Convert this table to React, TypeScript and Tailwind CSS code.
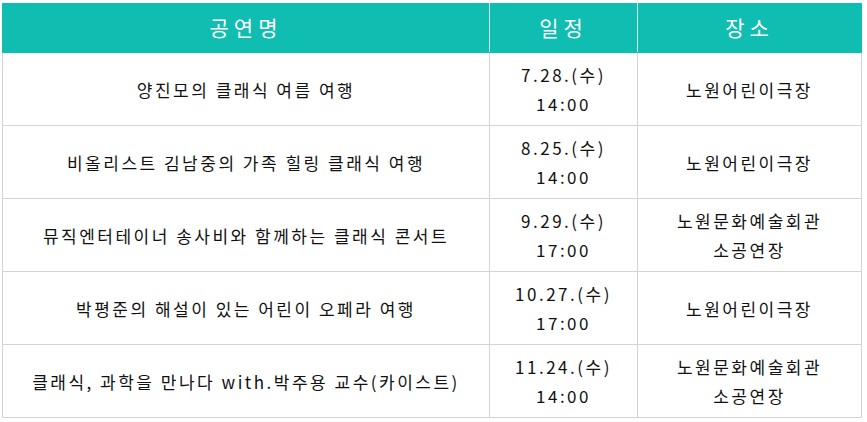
const ROWS = [
  { title: "양진모의 클래식 여름 여행", date: "7.28.(수)", time: "14:00", place: ["노원어린이극장"] },
  { title: "비올리스트 김남중의 가족 힐링 클래식 여행", date: "8.25.(수)", time: "14:00", place: ["노원어린이극장"] },
  { title: "뮤직엔터테이너 송사비와 함께하는 클래식 콘서트", date: "9.29.(수)", time: "17:00", place: ["노원문화예술회관", "소공연장"] },
  { title: "박평준의 해설이 있는 어린이 오페라 여행", date: "10.27.(수)", time: "17:00", place: ["노원어린이극장"] },
  { title: "클래식, 과학을 만나다 with.박주용 교수(카이스트)", date: "11.24.(수)", time: "14:00", place: ["노원문화예술회관", "소공연장"] },
];

export default function App() {
  return (
    <div className="min-h-screen bg-white pl-[2px] pt-[3px] text-[#111] [font-family:'Noto_Sans_CJK_KR',sans-serif]">
      <table className="w-[859px] table-fixed border-collapse text-[17px] tracking-[2.5px]">
        <colgroup>
          <col className="w-[487px]" />
          <col className="w-[148px]" />
          <col className="w-[224px]" />
        </colgroup>
        <thead>
          <tr className="h-[49px] bg-[#0fbdb1] text-[21px] tracking-[5px] text-white">
            <th className="border border-[#0fbdb1] border-r-[#d9f2ef] font-normal">공연명</th>
            <th className="border border-[#0fbdb1] border-r-[#d9f2ef] font-normal">일정</th>
            <th className="border border-[#0fbdb1] font-normal">장소</th>
          </tr>
        </thead>
        <tbody>
          {ROWS.map((r) => (
            <tr key={r.title} className="h-[73px] text-center leading-[29px]">
              <td className="border border-[#d4d4d4]">{r.title}</td>
              <td className="border border-[#d4d4d4]">
                <div>{r.date}</div>
                <div>{r.time}</div>
              </td>
              <td className="border border-[#d4d4d4]">
                {r.place.map((p) => (
                  <div key={p}>{p}</div>
                ))}
              </td>
            </tr>
          ))}
        </tbody>
      </table>
    </div>
  );
}
